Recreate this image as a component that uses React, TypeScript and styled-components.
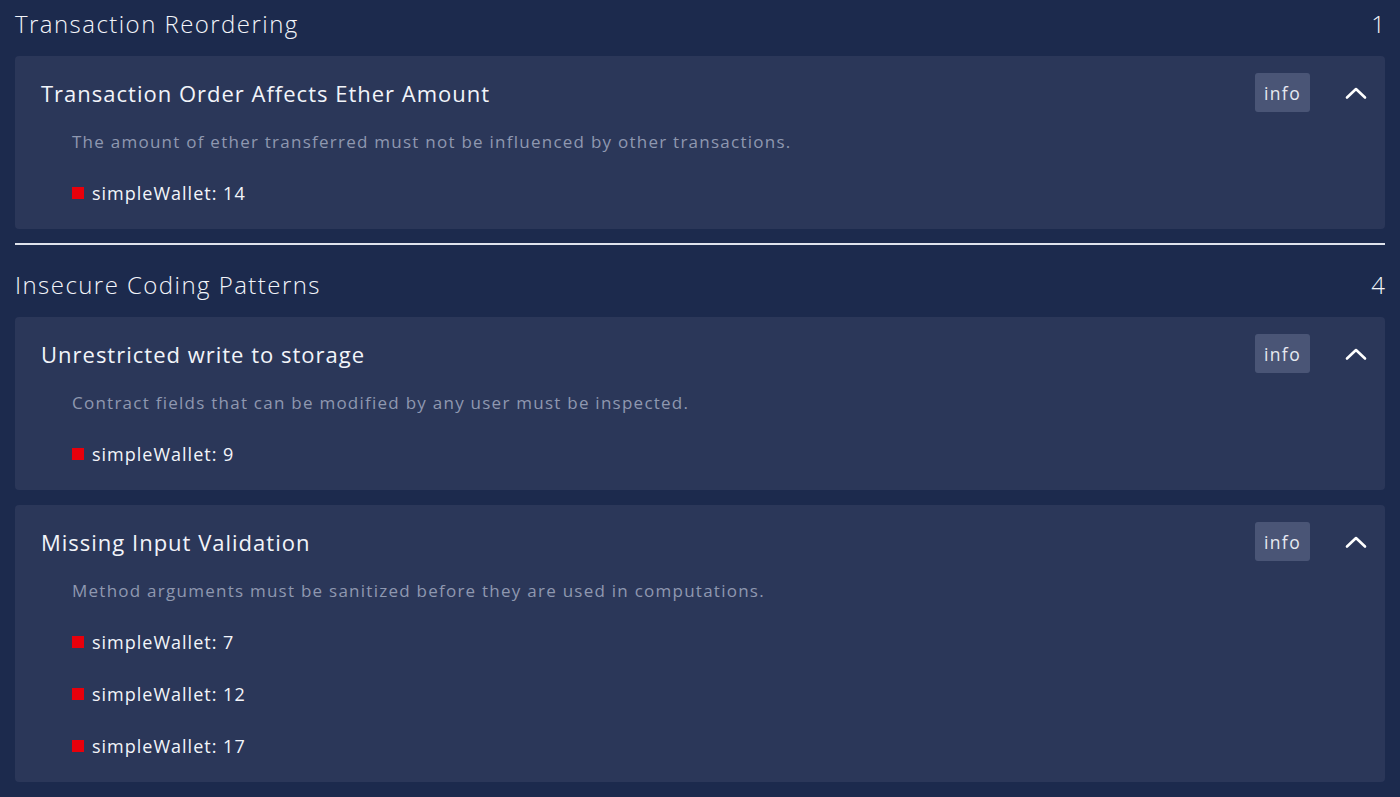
import React from "react";
import styled, { createGlobalStyle } from "styled-components";

const Global = createGlobalStyle`
  html, body { margin: 0; padding: 0; background: #1c2a4d; }
  body { font-family: "Open Sans", "Noto Sans", sans-serif; color: #eef0f6; }
  * { box-sizing: border-box; }
`;

const Page = styled.div`
  width: 1400px;
  height: 797px;
  overflow: hidden;
  padding: 6px 15px 0 15px;
  background: #1c2a4d;
`;

const Section = styled.section`
  display: flex;
  flex-direction: column;
`;

const SectionHeader = styled.div`
  height: 34px;
  display: flex;
  align-items: center;
  justify-content: space-between;
  margin-bottom: 16px;
  font-size: 24px;
  font-weight: 300;
  color: #f3f5fa;
  letter-spacing: 1.45px;
`;

const Count = styled.span`
  letter-spacing: 0;
`;

const Cards = styled.div`
  display: flex;
  flex-direction: column;
  gap: 15px;
`;

const Card = styled.div`
  background: #2b3759;
  border-radius: 4px;
  padding: 17px 19px 0 26px;
`;

const CardHeader = styled.div`
  height: 39px;
  display: flex;
  align-items: center;
`;

const CardTitle = styled.div`
  flex: 1;
  font-size: 22px;
  font-weight: 400;
  color: #f2f4f9;
  letter-spacing: 1px;
`;

const InfoBadge = styled.span`
  width: 55px;
  height: 39px;
  display: flex;
  align-items: center;
  justify-content: center;
  background: #4a5576;
  border-radius: 3px;
  font-size: 17.5px;
  letter-spacing: 1.4px;
  color: #e6e9f1;
  margin-right: 35px;
`;

const Chevron = styled.svg`
  width: 22px;
  height: 14px;
  display: block;
  margin-right: -1px;
`;

const Description = styled.div`
  margin-top: 19px;
  margin-left: 31px;
  height: 22px;
  line-height: 22px;
  font-size: 17px;
  font-weight: 400;
  color: #8f98b0;
  letter-spacing: 1.25px;
`;

const Items = styled.ul`
  list-style: none;
  margin: 14px 0 0 31px;
  padding: 0 0 10px 0;
  display: flex;
  flex-direction: column;
`;

const Item = styled.li`
  height: 52px;
  display: flex;
  align-items: center;
  font-size: 18px;
  font-weight: 500;
  color: #f3f5fa;
  letter-spacing: 1px;
`;

const Marker = styled.span`
  width: 12px;
  height: 12px;
  background: #e8000b;
  margin-right: 8px;
  flex-shrink: 0;
`;

const Divider = styled.hr`
  border: none;
  height: 2px;
  background: #dfe3ec;
  margin: 14px 0 22px 0;
`;

type Finding = { title: string; desc: string; lines: number[] };
type Group = { name: string; count: number; findings: Finding[] };

const groups: Group[] = [
  {
    name: "Transaction Reordering",
    count: 1,
    findings: [
      {
        title: "Transaction Order Affects Ether Amount",
        desc: "The amount of ether transferred must not be influenced by other transactions.",
        lines: [14],
      },
    ],
  },
  {
    name: "Insecure Coding Patterns",
    count: 4,
    findings: [
      {
        title: "Unrestricted write to storage",
        desc: "Contract fields that can be modified by any user must be inspected.",
        lines: [9],
      },
      {
        title: "Missing Input Validation",
        desc: "Method arguments must be sanitized before they are used in computations.",
        lines: [7, 12, 17],
      },
    ],
  },
];

const FindingCard = ({ f }: { f: Finding }) => (
  <Card>
    <CardHeader>
      <CardTitle>{f.title}</CardTitle>
      <InfoBadge>info</InfoBadge>
      <Chevron viewBox="0 0 22 14">
        <polyline
          points="2,11.5 11,3 20,11.5"
          fill="none"
          stroke="#ffffff"
          strokeWidth="2.6"
          strokeLinecap="round"
          strokeLinejoin="round"
        />
      </Chevron>
    </CardHeader>
    <Description>{f.desc}</Description>
    <Items>
      {f.lines.map((l) => (
        <Item key={l}>
          <Marker />
          simpleWallet: {l}
        </Item>
      ))}
    </Items>
  </Card>
);

export default function App() {
  return (
    <>
      <Global />
      <Page>
        {groups.map((g, i) => (
          <React.Fragment key={g.name}>
            {i > 0 && <Divider />}
            <Section>
              <SectionHeader>
                <span>{g.name}</span>
                <Count>{g.count}</Count>
              </SectionHeader>
              <Cards>
                {g.findings.map((f) => (
                  <FindingCard key={f.title} f={f} />
                ))}
              </Cards>
            </Section>
          </React.Fragment>
        ))}
      </Page>
    </>
  );
}
